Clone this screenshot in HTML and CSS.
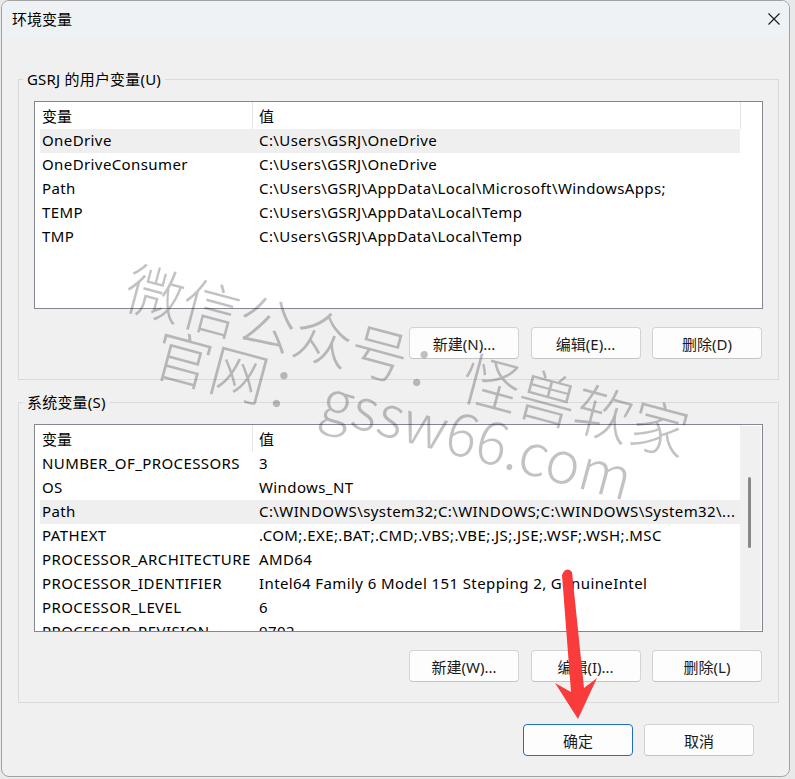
FILE: index.html
```html
<!DOCTYPE html>
<html lang="zh-CN">
<head>
<meta charset="utf-8">
<title>环境变量</title>
<link rel="stylesheet" href="styles.css">
</head>
<body>
<div class="window">
  <div class="titlebar">
    <span class="title">环境变量</span>
    <span class="close"><svg width="12" height="12" viewBox="0 0 12 12"><path d="M0.5 0.5 L11.5 11.5 M11.5 0.5 L0.5 11.5" stroke="#1a1a1a" stroke-width="1.1" fill="none"/></svg></span>
  </div>
  <div class="content">
    <fieldset class="group first">
      <legend>GSRJ 的用户变量(U)</legend>
      <div class="group-inner">
        <div class="list">
          <div class="list-main">
            <div class="row header"><span class="c1">变量</span><span class="c2">值</span></div>
            <div class="row sel"><span class="c1">OneDrive</span><span class="c2">C:\Users\GSRJ\OneDrive</span></div>
            <div class="row"><span class="c1">OneDriveConsumer</span><span class="c2">C:\Users\GSRJ\OneDrive</span></div>
            <div class="row"><span class="c1">Path</span><span class="c2">C:\Users\GSRJ\AppData\Local\Microsoft\WindowsApps;</span></div>
            <div class="row"><span class="c1">TEMP</span><span class="c2">C:\Users\GSRJ\AppData\Local\Temp</span></div>
            <div class="row"><span class="c1">TMP</span><span class="c2">C:\Users\GSRJ\AppData\Local\Temp</span></div>
          </div>
        </div>
        <div class="btns">
          <button class="btn">新建(N)...</button>
          <button class="btn">编辑(E)...</button>
          <button class="btn">删除(D)</button>
        </div>
      </div>
    </fieldset>
    <fieldset class="group second">
      <legend>系统变量(S)</legend>
      <div class="group-inner">
        <div class="list">
          <div class="list-main">
            <div class="row header"><span class="c1">变量</span><span class="c2">值</span></div>
            <div class="row"><span class="c1">NUMBER_OF_PROCESSORS</span><span class="c2">3</span></div>
            <div class="row"><span class="c1">OS</span><span class="c2">Windows_NT</span></div>
            <div class="row sel"><span class="c1">Path</span><span class="c2">C:\WINDOWS\system32;C:\WINDOWS;C:\WINDOWS\System32\...</span></div>
            <div class="row"><span class="c1">PATHEXT</span><span class="c2">.COM;.EXE;.BAT;.CMD;.VBS;.VBE;.JS;.JSE;.WSF;.WSH;.MSC</span></div>
            <div class="row"><span class="c1">PROCESSOR_ARCHITECTURE</span><span class="c2">AMD64</span></div>
            <div class="row"><span class="c1">PROCESSOR_IDENTIFIER</span><span class="c2">Intel64 Family 6 Model 151 Stepping 2, GenuineIntel</span></div>
            <div class="row"><span class="c1">PROCESSOR_LEVEL</span><span class="c2">6</span></div>
            <div class="row"><span class="c1">PROCESSOR_REVISION</span><span class="c2">9702</span></div>
          </div>
          <div class="scrollbar"><div class="thumb"></div></div>
        </div>
        <div class="btns">
          <button class="btn">新建(W)...</button>
          <button class="btn">编辑(I)...</button>
          <button class="btn">删除(L)</button>
        </div>
      </div>
    </fieldset>
    <div class="footer">
      <button class="btn default">确定</button>
      <button class="btn">取消</button>
    </div>
  </div>
</div>
<div class="wm wm1">微信公众号：怪兽软家</div>
<div class="wm wm2">官网：gssw66.com</div>
<svg class="arrow" width="795" height="779" viewBox="0 0 795 779">
  <path d="M562 575 Q566 566 572 572 L584 688 L597 678 L578 719 L555 683 L571 692 Z" fill="#f93b3b"/>
</svg>
</body>
</html>
```
FILE: styles.css
```css
html, body {
  margin: 0;
  padding: 0;
}
body {
  position: relative;
  width: 795px;
  height: 779px;
  overflow: hidden;
  background: #e9e9e9;
  font-family: "Noto Sans", "Noto Sans CJK SC", sans-serif;
  font-size: 15px;
  color: #000;
}
.window {
  position: relative;
  box-sizing: border-box;
  margin-left: 1px;
  width: 789px;
  height: 777px;
  border: 1px solid #a3a3a3;
  border-radius: 8px;
  background: #f0f0f0;
  overflow: hidden;
}
.titlebar {
  height: 36px;
  background: #eef2f5;
  display: flex;
  align-items: center;
  justify-content: space-between;
  padding: 0 9px 0 10px;
}
.title {
  font-size: 15px;
  line-height: 20px;
}
.close {
  display: flex;
  width: 12px;
  height: 12px;
}
.content {
  padding: 0 10px 0 16px;
}
.group {
  margin: 0;
  padding: 0;
  border: 1px solid #dadada;
  min-width: 0;
}
.group.first {
  margin-top: 32px;
}
.group.second {
  margin-top: 12px;
}
.group legend {
  margin-left: 4px;
  padding: 0 4px;
  line-height: 20px;
  font-size: 15px;
  letter-spacing: 0.2px;
}
.group-inner {
  padding: 12px 15px 20px 15px;
}
.list {
  box-sizing: border-box;
  height: 208px;
  border: 1px solid #838791;
  background: #fff;
  display: flex;
  overflow: hidden;
}
.list-main {
  flex: 1;
  min-width: 0;
}
.row {
  display: grid;
  grid-template-columns: 212px 488px;
  margin-left: 5px;
  width: 700px;
  height: 24px;
  line-height: 23px;
  white-space: nowrap;
  letter-spacing: 0.4px;
}
.row .c1 {
  padding-left: 2px;
  overflow: hidden;
}
.row .c2 {
  padding-left: 7px;
  overflow: hidden;
}
.row.header {
  height: 27px;
  line-height: 28px;
  margin-left: 0;
  padding-left: 5px;
  width: 700px;
  border-right: 1px solid #e5e5e5;
  letter-spacing: 0;
}
.row.header .c2 {
  border-left: 1px solid #e5e5e5;
  padding-left: 6px;
}
.row.sel {
  background: #efefef;
}
.scrollbar {
  width: 21px;
  margin: 1px 1px 1px 0;
  background: #f0f0f0;
  position: relative;
}
.thumb {
  margin: 51px 0 0 8px;
  width: 3px;
  height: 71px;
  border-radius: 2px;
  background: #878787;
}
.btns {
  display: flex;
  justify-content: flex-end;
  gap: 11.5px;
  margin-top: 18px;
  margin-right: 1px;
}
.btn {
  box-sizing: border-box;
  width: 110px;
  height: 32px;
  padding: 0;
  background: #fdfdfd;
  border: 1px solid #d3d3d3;
  border-bottom-color: #c4c4c4;
  border-radius: 4px;
  font-family: "Noto Sans", "Noto Sans CJK SC", sans-serif;
  font-size: 15px;
  color: #1a1a1a;
}
.btn.default {
  border: 1px solid #1c6fc4;
}
.footer {
  display: flex;
  justify-content: flex-end;
  gap: 11px;
  margin-top: 21px;
  padding-right: 25px;
}
.wm {
  position: absolute;
  font-family: "Noto Sans CJK SC", "Noto Sans", sans-serif;
  font-weight: 300;
  font-size: 58px;
  line-height: 58px;
  color: rgba(0, 0, 0, 0.24);
  white-space: nowrap;
  transform-origin: 0 50%;
  transform: rotate(15deg);
  pointer-events: none;
}
.wm1 {
  left: 128px;
  top: 254px;
}
.wm2 {
  left: 156px;
  top: 320px;
}
.arrow {
  position: absolute;
  left: 0;
  top: 0;
  pointer-events: none;
}
```
